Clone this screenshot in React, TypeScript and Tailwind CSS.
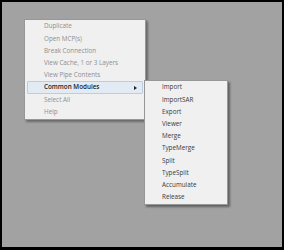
import React from "react";

const mainItems: { label: string; active?: boolean }[] = [
  { label: "Duplicate" },
  { label: "Open MCP(s)" },
  { label: "Break Connection" },
  { label: "View Cache, 1 or 3 Layers" },
  { label: "View Pipe Contents" },
  { label: "Common Modules", active: true },
  { label: "Select All" },
  { label: "Help" },
];

const subItems = [
  "Import",
  "ImportSAR",
  "Export",
  "Viewer",
  "Merge",
  "TypeMerge",
  "Split",
  "TypeSplit",
  "Accumulate",
  "Release",
];

export default function App() {
  return (
    <div
      className="w-[284px] h-[250px] bg-black pt-[2px] pl-[2px] pr-[2px] pb-[3px]"
      style={{ fontFamily: '"Open Sans", "Noto Sans", sans-serif' }}
    >
      <div className="relative w-full h-full bg-[#a2a2a2]">
        {/* main context menu */}
        <div className="absolute left-[22px] top-[17px] w-[122px] bg-[#f0f0f0] border border-[#979797] py-[0.5px] shadow-[2px_2px_2px_rgba(0,0,0,0.35)]">
          {mainItems.map((it) => (
            <div
              key={it.label}
              className={
                it.active
                  ? "relative mx-[2px] h-[12.2px] flex items-center pl-[16px] pr-[4px] bg-[#e2eaf4] border border-[#bccde2] rounded-[1px] text-[6.3px] font-semibold text-[#1c1c1c]"
                  : "relative mx-[2px] h-[12.2px] flex items-center pl-[17px] pr-[4px] text-[6.3px] text-[#8f8f8f]"
              }
            >
              <span className="leading-none whitespace-nowrap">{it.label}</span>
              {it.active && (
                <svg
                  className="absolute right-[5px] top-1/2 -translate-y-1/2"
                  width="3"
                  height="4"
                  viewBox="0 0 3 4"
                >
                  <path d="M0 0 L3 2 L0 4 Z" fill="#222" />
                </svg>
              )}
            </div>
          ))}
        </div>

        {/* submenu */}
        <div className="absolute left-[142px] top-[78px] w-[84px] bg-[#f0f0f0] border border-[#979797] py-[0.5px] shadow-[2px_2px_2px_rgba(0,0,0,0.4)]">
          {subItems.map((s) => (
            <div
              key={s}
              className="h-[12.2px] flex items-center pl-[17px] text-[6.3px] text-[#3a3a3a]"
            >
              <span className="leading-none whitespace-nowrap">{s}</span>
            </div>
          ))}
        </div>
      </div>
    </div>
  );
}
